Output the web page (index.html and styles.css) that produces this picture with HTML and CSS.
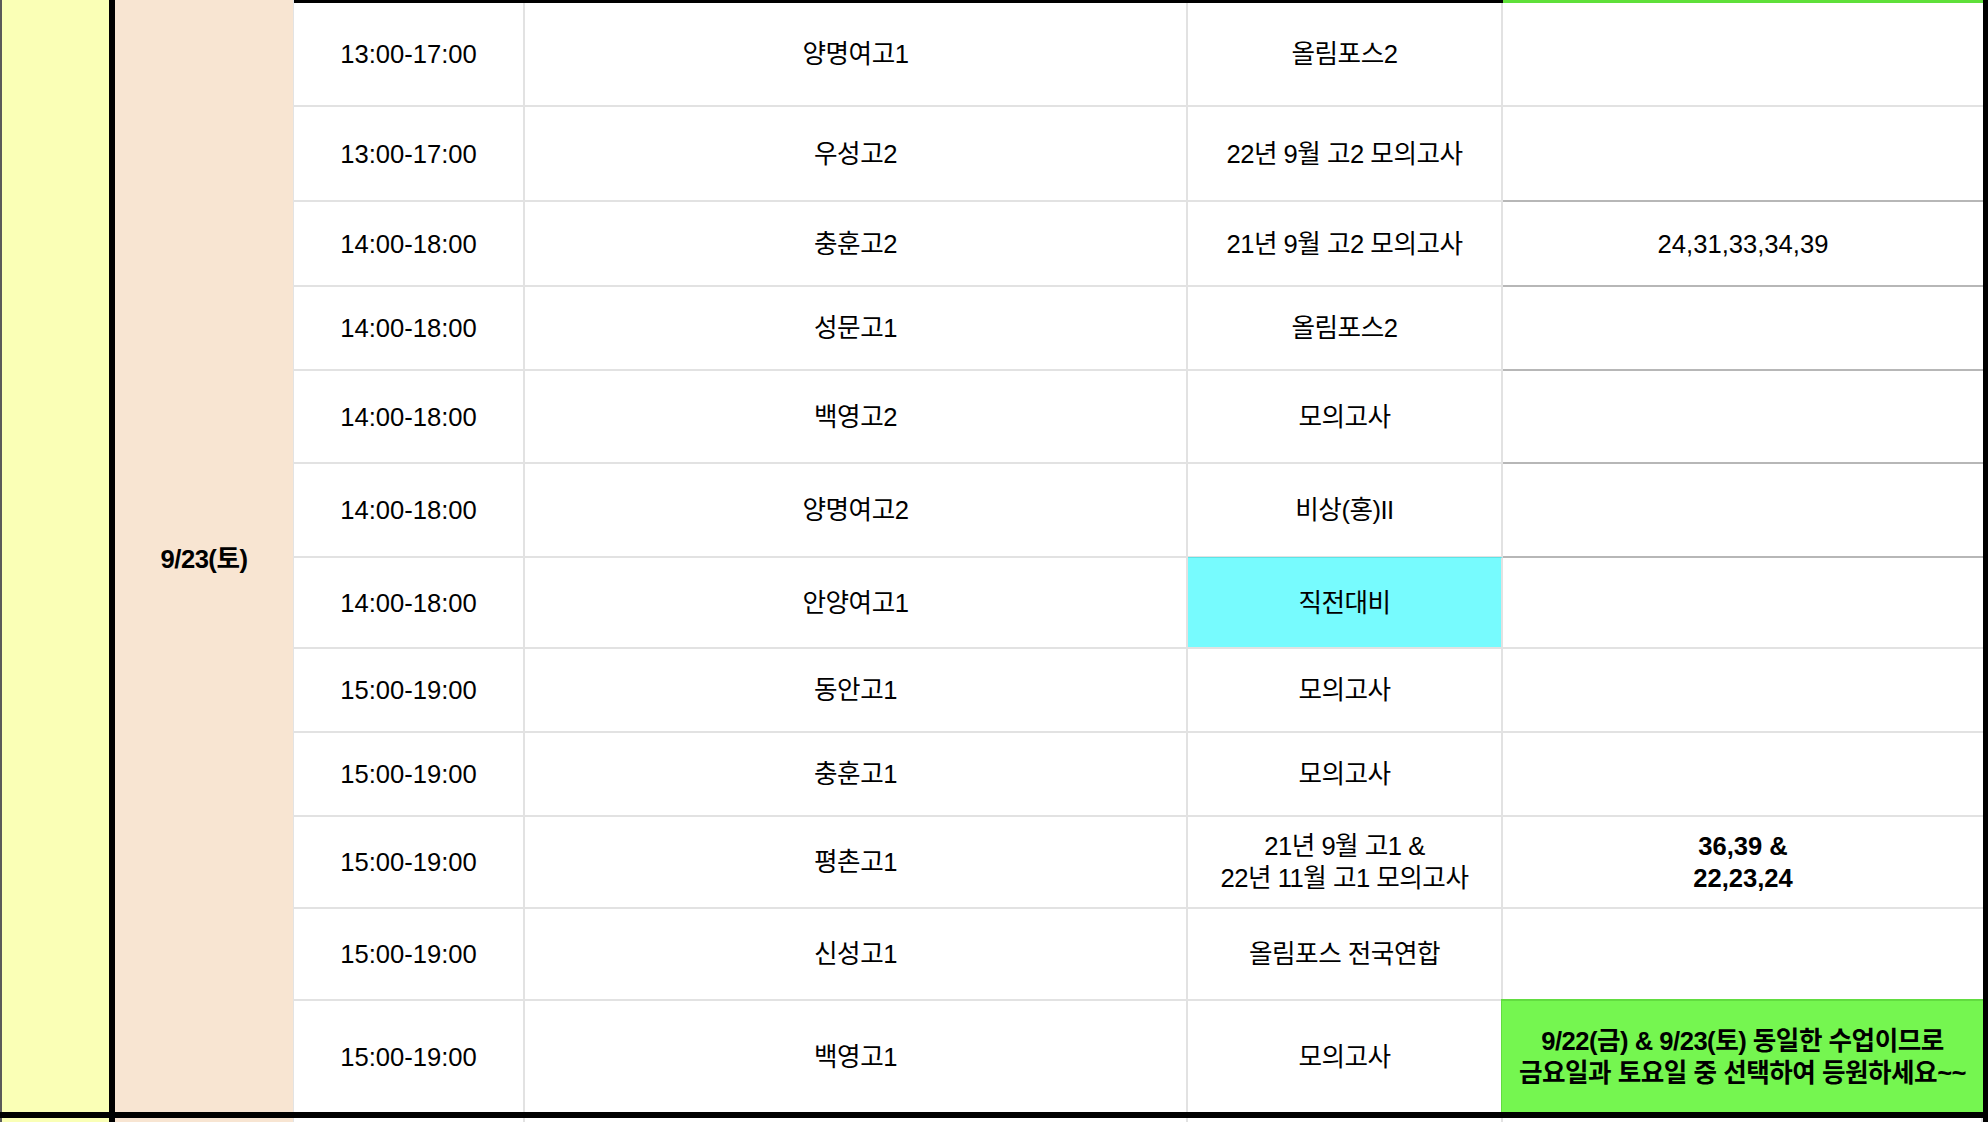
FILE: index.html
```html
<!DOCTYPE html>
<html lang="ko">
<head>
    <meta charset="UTF-8">
    <meta name="viewport" content="width=device-width, initial-scale=1.0">
    <title>수업 일정</title>
    <link rel="stylesheet" href="styles.css">
</head>
<body>
    <div class="block">
        <div class="week"></div>
        <div class="day ko">9/23(토)</div>
        <div class="slots">
            <div class="edge"></div>
            <div class="edge edge-green"></div>

            <div class="cell time">13:00-17:00</div>
            <div class="cell ko">양명여고1</div>
            <div class="cell ko">올림포스2</div>
            <div class="cell note"></div>

            <div class="cell time">13:00-17:00</div>
            <div class="cell ko">우성고2</div>
            <div class="cell ko">22년 9월 고2 모의고사</div>
            <div class="cell note dark"></div>

            <div class="cell time">14:00-18:00</div>
            <div class="cell ko">충훈고2</div>
            <div class="cell ko">21년 9월 고2 모의고사</div>
            <div class="cell note dark">24,31,33,34,39</div>

            <div class="cell time">14:00-18:00</div>
            <div class="cell ko">성문고1</div>
            <div class="cell ko">올림포스2</div>
            <div class="cell note dark"></div>

            <div class="cell time">14:00-18:00</div>
            <div class="cell ko">백영고2</div>
            <div class="cell ko">모의고사</div>
            <div class="cell note dark"></div>

            <div class="cell time">14:00-18:00</div>
            <div class="cell ko">양명여고2</div>
            <div class="cell ko">비상(홍)II</div>
            <div class="cell note dark"></div>

            <div class="cell time">14:00-18:00</div>
            <div class="cell ko">안양여고1</div>
            <div class="cell ko cyan">직전대비</div>
            <div class="cell note"></div>

            <div class="cell time">15:00-19:00</div>
            <div class="cell ko">동안고1</div>
            <div class="cell ko">모의고사</div>
            <div class="cell note"></div>

            <div class="cell time">15:00-19:00</div>
            <div class="cell ko">충훈고1</div>
            <div class="cell ko">모의고사</div>
            <div class="cell note"></div>

            <div class="cell time">15:00-19:00</div>
            <div class="cell ko">평촌고1</div>
            <div class="cell ko">21년 9월 고1 &amp;<br>22년 11월 고1 모의고사</div>
            <div class="cell note bold">36,39 &amp;<br>22,23,24</div>

            <div class="cell time">15:00-19:00</div>
            <div class="cell ko">신성고1</div>
            <div class="cell ko">올림포스 전국연합</div>
            <div class="cell note"></div>

            <div class="cell time last">15:00-19:00</div>
            <div class="cell ko last">백영고1</div>
            <div class="cell ko last">모의고사</div>
            <div class="cell note last green ko">9/22(금) &amp; 9/23(토) 동일한 수업이므로<br>금요일과 토요일 중 선택하여 등원하세요~~</div>
        </div>
    </div>
    <div class="next">
        <div class="week"></div>
        <div class="day"></div>
        <div class="slots-next">
            <div></div>
            <div></div>
            <div></div>
            <div></div>
        </div>
    </div>
</body>
</html>
```

FILE: styles.css
```css
body {
    margin: 0;
    background: #fff;
    color: #000;
    font-family: "Liberation Sans", "Noto Sans CJK KR", sans-serif;
    font-size: 25.6px;
    overflow: hidden;
}
.block {
    display: flex;
    height: 1118px;
    border-bottom: 6px solid #000;
    box-sizing: border-box;
}
.week {
    width: 115px;
    flex-shrink: 0;
    box-sizing: border-box;
    background: #faffb6;
    border-left: 2px solid #5a5a5a;
    border-right: 6px solid #000;
}
.day {
    width: 178px;
    flex-shrink: 0;
    background: #f8e5d2;
    display: flex;
    align-items: center;
    justify-content: center;
    font-weight: bold;
}
.slots {
    flex: 1;
    display: grid;
    grid-template-columns: 231px 663px 315px 480px;
    grid-template-rows: 3px 104px 95px 85px 84px 93px 94px 91px 84px 84px 92px 92px 111px;
    border-left: 1px solid #e3e3e3;
    border-right: 5px solid #000;
}
.edge {
    grid-column: 1 / 4;
    background: #000;
}
.edge-green {
    grid-column: 4;
    background: #5fe03a;
}
.cell {
    display: flex;
    align-items: center;
    justify-content: center;
    text-align: center;
    line-height: 32px;
    border-right: 2px solid #e2e2e2;
    border-bottom: 2px solid #e2e2e2;
    box-sizing: border-box;
}
.ko {
    letter-spacing: -0.5px;
}
.note {
    border-right: none;
}
.dark {
    border-bottom-color: #b7b7b7;
}
.last {
    border-bottom: none;
}
.bold {
    font-weight: bold;
}
.cyan {
    background: #77fbfe;
    border-top: 1px solid #5ee3e6;
    margin-top: -1px;
}
.green {
    background: #75f650;
    font-weight: bold;
    border-top: 2px solid #62dc40;
    border-left: 1px solid #62dc40;
    margin-top: -2px;
    margin-left: -2px;
}
.next {
    display: flex;
    height: 4px;
}
.slots-next {
    flex: 1;
    display: grid;
    grid-template-columns: 231px 663px 315px 480px;
    border-left: 1px solid #e3e3e3;
    border-right: 5px solid #000;
}
.slots-next div {
    border-right: 2px solid #e2e2e2;
}
```
